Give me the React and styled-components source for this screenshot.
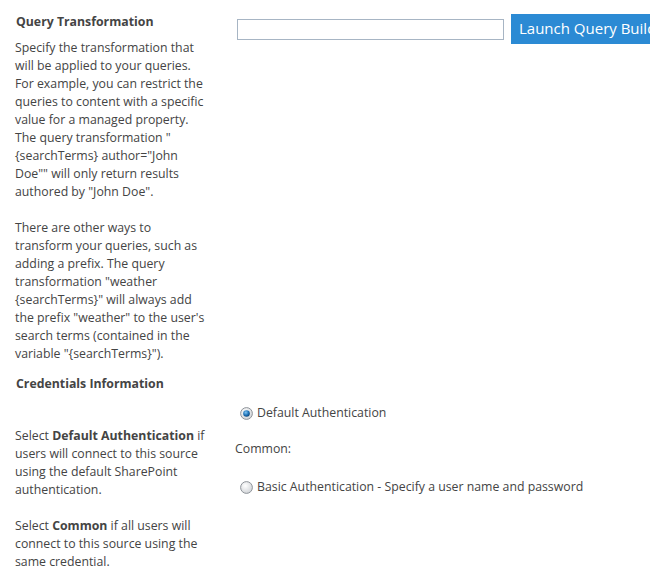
import React from "react";
import styled, { createGlobalStyle } from "styled-components";

const GlobalStyle = createGlobalStyle`
  html, body {
    margin: 0;
    padding: 0;
    background: #fff;
    overflow: hidden;
  }
  body {
    font-family: "Open Sans", "Noto Sans", sans-serif;
    color: #444;
  }
`;

const Page = styled.div`
  width: 658px;
  height: 576px;
  overflow: hidden;
  display: flex;
  flex-direction: column;
`;

const Section = styled.div`
  display: grid;
  grid-template-columns: 235px 415px;
  padding-top: ${(p) => p.$top}px;
`;

const Info = styled.div`
  padding-left: 15px;
  display: flex;
  flex-direction: column;
`;

const Title = styled.h3`
  margin: 0 0 ${(p) => p.$gap}px 1px;
  font-size: 12.3px;
  font-weight: 700;
  line-height: 18px;
  color: #444;
  white-space: nowrap;
`;

const Text = styled.p`
  margin: 0 0 18px 0;
  font-size: 12.3px;
  line-height: 18px;
  white-space: nowrap;
  color: #444;

  &:last-child {
    margin-bottom: 0;
  }

  b {
    font-weight: 700;
  }
`;

const Controls = styled.div`
  display: flex;
  flex-direction: column;
  min-width: 0;
  overflow: hidden;
  padding-top: ${(p) => p.$top || 0}px;
`;

const QueryRow = styled.div`
  display: flex;
  align-items: center;
  gap: 7px;
  padding-left: 2px;
  padding-top: 1px;
`;

const TextBox = styled.input`
  box-sizing: border-box;
  width: 267px;
  height: 21px;
  flex-shrink: 0;
  border: 1px solid #a7b5c4;
  background: #fff;
  margin: 0;
  padding: 0 4px;
  outline: none;
`;

const LaunchButton = styled.button`
  box-sizing: border-box;
  height: 30px;
  min-width: 190px;
  flex-shrink: 0;
  border: none;
  margin: 0;
  padding: 0 0 2px 8px;
  background: #2b8ad4;
  color: #fff;
  font-family: "Open Sans", "Noto Sans", sans-serif;
  font-size: 15px;
  text-align: left;
  white-space: nowrap;
`;

const RadioRow = styled.label`
  display: flex;
  align-items: center;
  gap: 4px;
  padding-left: 5px;
  height: 18px;
  font-size: 12.3px;
  line-height: 18px;
  color: #444;
  margin-bottom: ${(p) => p.$gap || 0}px;
  white-space: nowrap;
`;

const GroupLabel = styled.div`
  font-size: 12.3px;
  line-height: 18px;
  height: 18px;
  color: #444;
  margin-bottom: ${(p) => p.$gap || 0}px;
`;

const Radio = ({ checked }) => (
  <svg width="13" height="13" viewBox="0 0 13 13">
    <defs>
      <radialGradient id={checked ? "rgOn" : "rgOff"} cx="0.4" cy="0.35" r="0.7">
        <stop offset="0" stopColor="#ffffff" />
        <stop offset="1" stopColor="#cfd2d6" />
      </radialGradient>
      <radialGradient id="dot" cx="0.4" cy="0.35" r="0.7">
        <stop offset="0" stopColor="#7fc4f2" />
        <stop offset="0.6" stopColor="#1b6fb5" />
        <stop offset="1" stopColor="#0b3f6e" />
      </radialGradient>
    </defs>
    <circle
      cx="6.5"
      cy="6.5"
      r="5.9"
      fill={`url(#${checked ? "rgOn" : "rgOff"})`}
      stroke="#8f949a"
      strokeWidth="1"
    />
    {checked && <circle cx="6.5" cy="6.5" r="3.3" fill="url(#dot)" />}
  </svg>
);

const App = () => {
  return (
    <Page>
      <GlobalStyle />
      <Section $top={13}>
        <Info>
          <Title $gap={8}>Query Transformation</Title>
          <Text>
            Specify the transformation that
            <br />
            will be applied to your queries.
            <br />
            For example, you can restrict the
            <br />
            queries to content with a specific
            <br />
            value for a managed property.
            <br />
            The query transformation "
            <br />
            {"{searchTerms} author=\"John"}
            <br />
            Doe"" will only return results
            <br />
            authored by "John Doe".
          </Text>
          <Text>
            There are other ways to
            <br />
            transform your queries, such as
            <br />
            adding a prefix. The query
            <br />
            transformation "weather
            <br />
            {"{searchTerms}\" will always add"}
            <br />
            the prefix "weather" to the user's
            <br />
            search terms (contained in the
            <br />
            {"variable \"{searchTerms}\")."}
          </Text>
        </Info>
        <Controls>
          <QueryRow>
            <TextBox type="text" />
            <LaunchButton>Launch Query Builder</LaunchButton>
          </QueryRow>
        </Controls>
      </Section>
      <Section $top={12}>
        <Info>
          <Title $gap={34}>Credentials Information</Title>
          <Text>
            Select <b>Default Authentication</b> if
            <br />
            users will connect to this source
            <br />
            using the default SharePoint
            <br />
            authentication.
          </Text>
          <Text>
            Select <b>Common</b> if all users will
            <br />
            connect to this source using the
            <br />
            same credential.
          </Text>
        </Info>
        <Controls $top={29}>
          <RadioRow $gap={18}>
            <Radio checked />
            Default Authentication
          </RadioRow>
          <GroupLabel $gap={20}>Common:</GroupLabel>
          <RadioRow>
            <Radio />
            Basic Authentication - Specify a user name and password
          </RadioRow>
        </Controls>
      </Section>
    </Page>
  );
};

export default App;
